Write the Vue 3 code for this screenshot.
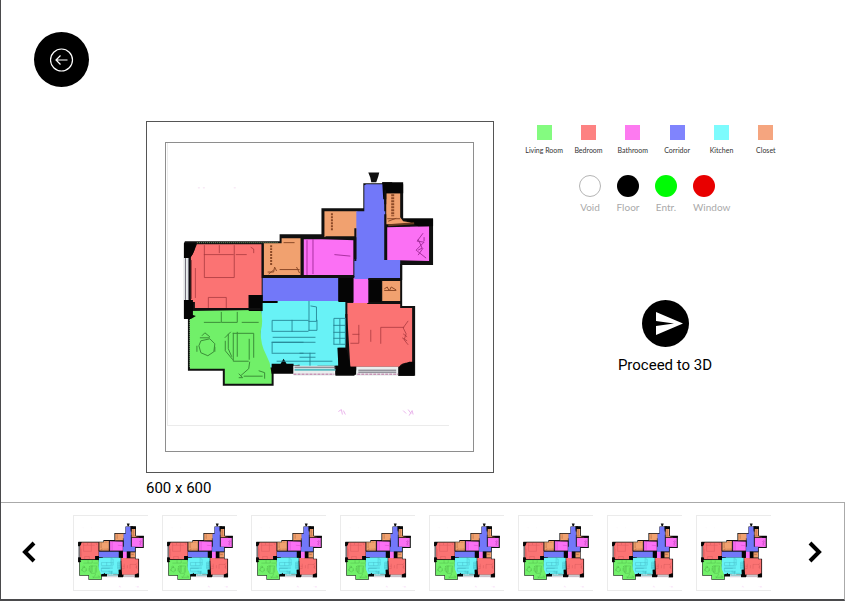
<script setup>
import { ref } from 'vue'

const rooms = [
  { name: 'Living Room', color: '#84fb80' },
  { name: 'Bedroom', color: '#fd8282' },
  { name: 'Bathroom', color: '#fd7af0' },
  { name: 'Corridor', color: '#8084fd' },
  { name: 'Kitchen', color: '#7dfbfd' },
  { name: 'Closet', color: '#f5a57f' }
]
const elements = [
  { name: 'Void', color: '#ffffff', outlined: true },
  { name: 'Floor', color: '#000000' },
  { name: 'Entr.', color: '#00fb05' },
  { name: 'Window', color: '#e80000' }
]
const thumbs = [1, 2, 3, 4, 5, 6, 7, 8]
const selected = ref(1)
</script>

<template>
  <div class="page">
    <svg class="defs" aria-hidden="true">
      <symbol id="floor-plan" viewBox="167 143 282 282">
        <!-- walls -->
        <path fill="#101010" d="M184 241H279V234H321V208H363V183H382V182H392V184H403V218H433V265H402V306H415V376H398L396 369H357L354 376H335V369H317L315 374H300V366H273V386H222V371H187V318H183V243Z" />
        <path fill="#101010" d="M368 172H379L378 176L376 182H371L370 177Z" />
        <!-- room fills -->
        <path fill="#fb7373" d="M196 244H261V295H248V308H194V302H190V257Q193 252 196 244Z" />
        <path fill="#f1a16f" d="M263 243H281V238H300V275H263ZM324 211H357V237H324ZM386 193H400V217L403 221L415 223L386 225ZM382 281H400V301H382Z" />
        <path fill="#fb70f4" d="M303 238L353 240V275H303ZM387 227L429 226V261L387 260ZM353 277H368V303H353Z" />
        <path fill="#7278f9" d="M366 184H384V211H385V260H400V279H354V259H356V211H364V185ZM262 278H338V301H262Z" />
        <path fill="#68f2f6" d="M261 303L278 301H345V315L346 348H338V366H317L315 371H300L299 365L268 368L259 345Z" />
        <path fill="#71f069" d="M189 311L260 310Q263 321 260 332Q260 345 265 354L269 363L271 374V384H224V369H189Z" />
        <path fill="#fb7373" d="M347 303H367V304H400V308H412V363Q402 362 399 367H350L347 318Z" />
        <!-- structural blocks -->
        <path fill="#050505" d="M183 243H195Q193 256 188 258H183ZM183 300H192V315L195 316L190 319H183ZM248 295H262V301H277V303H262V311H248ZM338 277H353V302H338ZM369 279H381V302H369ZM382 182H403V193H386V199H383ZM404 219H433V226H418ZM271 364H280L283 359L286 364H293V374H271ZM337 348H346L350 367H356V375H335V366H338ZM399 367L409 362H414V376H398Z" />
        <g fill="none" stroke="#101010" stroke-width="2">
          <path d="M385 214V225H410M385 225V260M385 190V204M355 228V260H356M302 238H354M325 237H356M262 243V277H338M302 236V277M354 277H338M401 264V279H368M346 314V350M194 309H260" />
          <path d="M388 225L414 223" stroke="#693a20" />
        </g>
        <!-- windows -->
        <path fill="#e9eeee" d="M183 258H188V300H183ZM293 366H334V376H293ZM356 367H398V376H356Z" />
        <g fill="none" stroke="#6d6875" stroke-width="1">
          <path d="M184.500 258V300M187.500 258V300M294 367.500H335M358 370.500H396M358 372.500H396" />
          <path stroke="#58bac0" stroke-width="2" d="M294 370H335" />
          <path stroke="#b76a9a" stroke-dasharray="3 1" d="M293 374.500H334M357 374.500H398" />
          <path stroke="#9a3e3e" d="M190.500 260V299" />
          <path stroke="#6d9a6c" stroke-dasharray="1 1" d="M196 242.500H278M188.500 320V368" />
        </g>
        <!-- furniture -->
        <g fill="none" stroke="#a5373c" stroke-width="1" opacity=".75">
          <path d="M203.500 245V277.500H233.500V245M203 254.500H233M218.500 245V253M235 254.500H246M250 247L253 249V253M207.500 308V297.500H225.500V308M194.500 268V298M380.500 344V327.500H404M370.500 330V342M358.500 325V343.500H350M352 334.500H359M403 328L408 321M403 328L406 334L404 340L408 345M403 334L407 337M402 338L407 341" />
        </g>
        <g fill="none" stroke="#824020" stroke-width="1" opacity=".9">
          <path d="M270.500 245V266" stroke-width="2" stroke-dasharray="2 1" />
          <path d="M267 272H273L274 267L276 271M268 274L273 270M279 269.500H299M296 267L299 273M283 242.500H294" />
          <path d="M331.500 213V231" stroke-width="2" stroke-dasharray="2 1" />
          <path d="M392.500 194V216" stroke-width="3" stroke-dasharray="2 1" />
          <path d="M387 218.500H400M388 221L396 218M384 289L387 287L389 291L391 287L396 290M384 290.500H396" />
        </g>
        <g fill="none" stroke="#9b2691" stroke-width="1" opacity=".85">
          <path d="M306.500 240V275M312.500 239V274M334 254.500L350 256M423 233L417 241L424 242L416 250L426 258M418 239L422 248L418 250M424 237V241M418 255L423 248" />
        </g>
        <g fill="none" stroke="#238090" stroke-width="1" opacity=".85">
          <path d="M308.500 301V331M308 321.500H316V307L310 306M316.500 320V330.500H308M271.500 331V320.500H308M271 331.500H308M291.500 320V332M272 337.500H315M272 342.500H315M271.500 353V342M271 342.500H303M271 353.500H303M309.500 353V366M299 353.500H315M276 361.500H332M299 357.500H315M345 318.500H333.500V344.500M333 344.500H345V318M339.500 319V344M333 325.500H345M333 332.500H345M333 338.500H345" />
        </g>
        <g fill="none" stroke="#327d30" stroke-width="1" opacity=".85">
          <path d="M203 322.500H220M220.500 312V322.500H236.500V312M241 322.500H258" />
          <path d="M200 341L209 339L214 344L213 352L207 356L200 353L198 346ZM201 336L204 333L209 337M199 338H209M196 346V352M214 347V352" />
          <path d="M232 333.500H253V358M232.500 333V361.500H248M236.500 332V357M248.500 339V360M224 338L230 332M227.500 334V349L231 357M224.500 341V351L232 360M249 362L248 369L240 376M238 374L242 378L238 378M243 376.500H262M258 371L264 373V379" />
        </g>
        <path fill="none" stroke="#eab6ec" stroke-width="1" d="M338 412L341 410L342 415M343 411L345 415M403 411L406 414M408 410L411 414M409 416L412 411L413 415" />
        <path fill="none" stroke="#f3dff1" stroke-width="1" d="M197 187.500H199M202 187.500H204M233 187.500H235" />
      </symbol>
    </svg>

    <header class="top">
      <button class="back" type="button" aria-label="Back">
        <svg viewBox="0 0 24 24" width="24" height="24" fill="none" stroke="#fff" stroke-width="1.200">
          <circle cx="11.500" cy="12" r="11" />
          <path d="M17.500 12H6M10.500 7.500L6 12L10.500 16.500" />
        </svg>
      </button>
    </header>

    <main class="content">
      <figure class="plan">
        <div class="outer">
          <div class="inner">
            <svg class="drawing sheet" role="img" aria-label="Floor plan"><use href="#floor-plan" /></svg>
          </div>
        </div>
        <figcaption>600 x 600</figcaption>
      </figure>

      <aside class="side">
        <ul class="rooms">
          <li v-for="room in rooms" :key="room.name">
            <span class="square" :style="{ background: room.color }"></span>
            <span>{{ room.name }}</span>
          </li>
        </ul>
        <ul class="elements">
          <li v-for="item in elements" :key="item.name">
            <span class="dot" :class="{ outlined: item.outlined }" :style="{ background: item.color }"></span>
            <span>{{ item.name }}</span>
          </li>
        </ul>
        <button class="proceed" type="button">
          <svg viewBox="0 0 47 47" width="47" height="47">
            <circle cx="23.500" cy="23.500" r="23.500" />
            <path fill="#fff" d="M14 12L41 23.500L14 35V26L32 23.500L14 21Z" />
          </svg>
          <span>Proceed to 3D</span>
        </button>
      </aside>
    </main>

    <footer class="strip">
      <button class="arrow" type="button" aria-label="Previous plans">
        <svg viewBox="0 0 14 22" width="14" height="22"><path d="M12 2L3 11L12 20" /></svg>
      </button>
      <div class="thumbs">
        <button
          v-for="n in thumbs"
          :key="n"
          class="thumb"
          type="button"
          :aria-label="'Plan ' + n"
          :aria-pressed="selected === n"
          @click="selected = n"
        >
          <svg class="sheet"><use href="#floor-plan" /></svg>
        </button>
      </div>
      <button class="arrow" type="button" aria-label="Next plans">
        <svg viewBox="0 0 14 22" width="14" height="22"><path d="M2 2L11 11L2 20" /></svg>
      </button>
    </footer>
  </div>
</template>

<style>
body {
  margin: 0;
  background: #fff;
}
</style>

<style scoped>
.page {
  box-sizing: border-box;
  min-height: 100vh;
  display: flex;
  flex-direction: column;
  border-left: 1px solid #4a4a4c;
  font-family: Roboto, "Liberation Sans", sans-serif;
  font-size: 15px;
  line-height: 20px;
  color: #000;
}
button {
  padding: 0;
  border: 0;
  background: none;
  color: inherit;
  font: inherit;
  cursor: pointer;
}
svg {
  display: block;
}
.defs {
  position: absolute;
  width: 0;
  height: 0;
}
.top {
  padding: 32px 33px 34px;
}
.back {
  width: 55px;
  height: 55px;
  display: grid;
  place-items: center;
  border-radius: 50%;
  background: #000;
}
.content {
  flex: 1;
  display: flex;
  align-items: flex-start;
  gap: 28px;
  padding-left: 145px;
}
.plan {
  margin: 0;
}
.outer {
  padding: 20px 19px 20px 18px;
  border: 1px solid #555;
}
.inner {
  padding: 0 24px 25px 1px;
  border: 1px solid #8e8e8e;
}
.sheet {
  box-sizing: border-box;
  border: solid #ebebeb;
  border-width: 0 0 1px 1px;
}
.drawing {
  width: 282px;
  height: 283px;
}
figcaption {
  padding: 5px 0 0;
}
.side {
  width: 266px;
  display: flex;
  flex-direction: column;
}
ul {
  margin: 0;
  padding: 0;
  list-style: none;
}
.rooms {
  display: grid;
  grid-template-columns: repeat(6, 1fr);
  padding-top: 4px;
  font-family: Lato, sans-serif;
  font-size: 7px;
  line-height: 10px;
  color: #333;
  white-space: nowrap;
}
.rooms li {
  display: flex;
  flex-direction: column;
  align-items: center;
  gap: 5px;
}
.square {
  width: 15px;
  height: 15px;
}
.elements {
  display: flex;
  gap: 16px;
  padding: 20px 0 0 57px;
  font-family: Lato, sans-serif;
  font-size: 10px;
  line-height: 14px;
  color: #aaa;
}
.elements li {
  width: 22px;
  display: flex;
  flex-direction: column;
  align-items: center;
  gap: 3px;
}
.elements li:last-child {
  align-items: flex-start;
}
.dot {
  box-sizing: border-box;
  width: 22px;
  height: 22px;
  border-radius: 50%;
}
.outlined {
  border: 1px solid #b5b5b5;
}
.proceed {
  align-self: center;
  display: flex;
  flex-direction: column;
  align-items: center;
  gap: 8px;
  margin-top: 86px;
  padding-left: 20px;
}
.strip {
  display: flex;
  align-items: center;
  justify-content: space-between;
  padding: 12px 22px 8px 21px;
  border: 1px solid #aaa;
  border-left: 0;
  border-bottom: 2px solid #4a4a4c;
}
.thumbs {
  display: flex;
  gap: 14px;
}
.thumb svg {
  width: 75px;
  height: 76px;
  border-top-width: 1px;
}
.arrow {
  padding-bottom: 3px;
}
.arrow path {
  fill: none;
  stroke: #000;
  stroke-width: 4;
}
</style>
